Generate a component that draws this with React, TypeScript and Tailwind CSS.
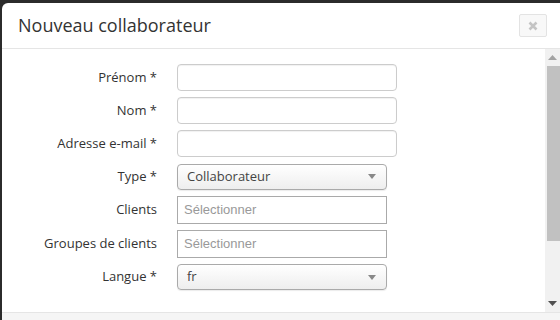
import React from "react";

const font = { fontFamily: '"Open Sans", "Liberation Sans", sans-serif' };

function Label({ children }: { children: React.ReactNode }) {
  return (
    <div className="w-[155px] shrink-0 text-right text-[13px] text-[#333]" style={font}>
      {children}
    </div>
  );
}

function TextInput() {
  return (
    <div className="w-[220px] h-[27px] rounded-[4px] border border-[#cccccc] bg-white shadow-[inset_0_1px_1px_rgba(0,0,0,0.06)]" />
  );
}

function Select({ value }: { value: string }) {
  return (
    <div className="w-[210px] h-[26px] rounded-[4px] border border-[#aaaaaa] bg-gradient-to-b from-white to-[#eeeeee] flex items-center justify-between pl-[9px] pr-[10px] shadow-[0_1px_1px_rgba(0,0,0,0.08)]">
      <span className="text-[13px] text-[#444]" style={font}>{value}</span>
      <svg width="8" height="5" viewBox="0 0 8 5"><path d="M0 0H8L4 5Z" fill="#888" /></svg>
    </div>
  );
}

function MultiSelect() {
  return (
    <div className="w-[210px] h-[28px] border border-[#aaaaaa] bg-white flex items-center pl-[6px]">
      <span className="text-[13px] text-[#999]" style={{ fontFamily: '"Liberation Sans", Arial, sans-serif' }}>Sélectionner</span>
    </div>
  );
}

function Row({ label, h, children }: { label: string; h: string; children: React.ReactNode }) {
  return (
    <div className={`flex items-center gap-[20px] ${h}`}>
      <Label>{label}</Label>
      {children}
    </div>
  );
}

export default function App() {
  return (
    <div className="w-[560px] h-[320px] bg-[#2b2b2b] pt-[3px] pl-[2px] overflow-hidden">
      <div className="bg-white rounded-tl-[6px] h-full flex flex-col">
        <div className="h-[46px] shrink-0 border-b border-[#e5e5e5] flex items-center justify-between pl-[16px] pr-[13px]">
          <div className="text-[18px] text-[#333]" style={font}>Nouveau collaborateur</div>
          <div className="w-[28px] h-[23px] border border-[#e3e3e3] bg-[#f8f8f8] rounded-[2px] flex items-center justify-center">
            <svg width="10" height="10" viewBox="0 0 10 10">
              <path d="M1.5 1.5L8.5 8.5M8.5 1.5L1.5 8.5" stroke="#c4c4c4" strokeWidth="2.6" />
            </svg>
          </div>
        </div>
        <div className="h-[263px] shrink-0 flex">
          <div className="flex-1 pt-[15px] flex flex-col gap-[6px]">
            <Row label="Prénom *" h="h-[27px]"><TextInput /></Row>
            <Row label="Nom *" h="h-[27px]"><TextInput /></Row>
            <Row label="Adresse e-mail *" h="h-[27px]"><TextInput /></Row>
            <Row label="Type *" h="h-[27px]"><Select value="Collaborateur" /></Row>
            <Row label="Clients" h="h-[28px]"><MultiSelect /></Row>
            <Row label="Groupes de clients" h="h-[28px]"><MultiSelect /></Row>
            <Row label="Langue *" h="h-[26px]"><Select value="fr" /></Row>
          </div>
          <div className="w-[15px] bg-[#f1f1f1] flex flex-col items-stretch">
            <div className="h-[17px] flex items-center justify-center">
              <svg width="9" height="5" viewBox="0 0 9 5"><path d="M0 5H9L4.5 0Z" fill="#a3a3a3" /></svg>
            </div>
            <div className="h-[175px] ml-[2px] bg-[#c1c1c1]" />
            <div className="flex-1" />
            <div className="h-[17px] flex items-center justify-center">
              <svg width="9" height="5" viewBox="0 0 9 5"><path d="M0 0H9L4.5 5Z" fill="#505050" /></svg>
            </div>
          </div>
        </div>
        <div className="flex-1 border-t border-[#e5e5e5] bg-[#f5f5f5]" />
      </div>
    </div>
  );
}
